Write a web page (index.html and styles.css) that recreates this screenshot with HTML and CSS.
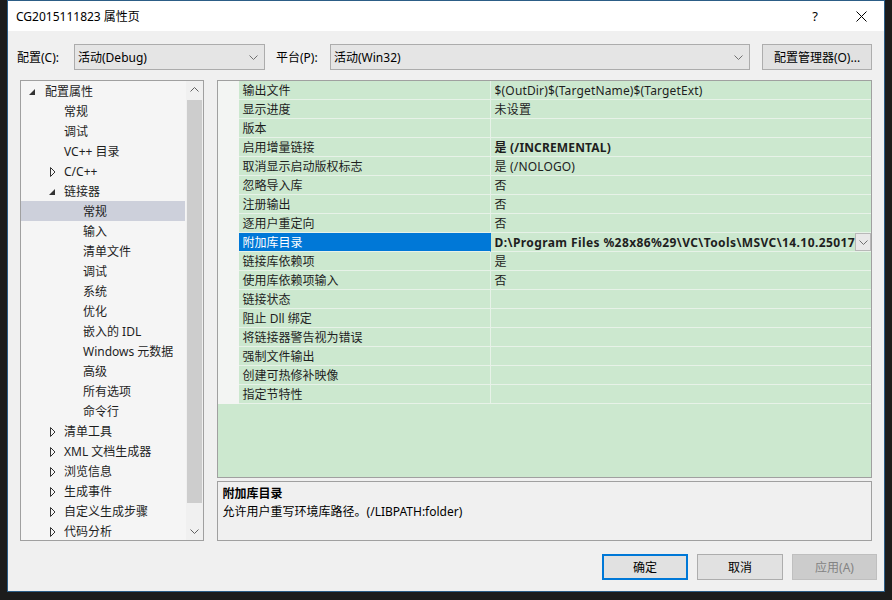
FILE: index.html
```html
<!DOCTYPE html>
<html lang="zh-CN">
<head>
<meta charset="utf-8">
<title>CG2015111823 属性页</title>
<link rel="stylesheet" href="styles.css">
</head>
<body>
<div class="desk">
  <div class="dialog">
    <div class="titlebar">
      <span class="title">CG2015111823 属性页</span>
      <span class="tb-btn help">?</span>
      <span class="tb-btn close"><svg width="11" height="11" viewBox="0 0 11 11"><path d="M0.5 0.5 L10.5 10.5 M10.5 0.5 L0.5 10.5" stroke="#000" stroke-width="1" fill="none"/></svg></span>
    </div>
    <div class="content">
      <div class="toprow">
        <span class="lbl lbl1">配置(C):</span>
        <div class="combo c1"><span>活动(Debug)</span><svg class="chev" width="9" height="5" viewBox="0 0 9 5"><path d="M0.5 0.5 L4.5 4.5 L8.5 0.5" stroke="#707070" fill="none"/></svg></div>
        <span class="lbl lbl2">平台(P):</span>
        <div class="combo c2"><span>活动(Win32)</span><svg class="chev" width="9" height="5" viewBox="0 0 9 5"><path d="M0.5 0.5 L4.5 4.5 L8.5 0.5" stroke="#707070" fill="none"/></svg></div>
        <div class="btn cfgmgr">配置管理器(O)...</div>
      </div>
      <div class="main">
        <div class="tree">
          <div class="tlist">
            <div class="ti l1"><span class="tw"><svg class="exp" width="7" height="7" viewBox="0 0 7 7"><path d="M6 0 L6 6 L0 6 Z" fill="#333"/></svg></span><span>配置属性</span></div>
            <div class="ti l2"><span class="tw"></span><span>常规</span></div>
            <div class="ti l2"><span class="tw"></span><span>调试</span></div>
            <div class="ti l2"><span class="tw"></span><span>VC++ 目录</span></div>
            <div class="ti l2"><span class="tw"><svg class="col" width="6" height="10" viewBox="0 0 6 10"><path d="M0.5 0.5 L5 5 L0.5 9.5 Z" stroke="#333" fill="none"/></svg></span><span>C/C++</span></div>
            <div class="ti l2"><span class="tw"><svg class="exp2" width="7" height="7" viewBox="0 0 7 7"><path d="M6 0 L6 6 L0 6 Z" fill="#333"/></svg></span><span>链接器</span></div>
            <div class="ti l3 sel"><span class="tw"></span><span>常规</span></div>
            <div class="ti l3"><span class="tw"></span><span>输入</span></div>
            <div class="ti l3"><span class="tw"></span><span>清单文件</span></div>
            <div class="ti l3"><span class="tw"></span><span>调试</span></div>
            <div class="ti l3"><span class="tw"></span><span>系统</span></div>
            <div class="ti l3"><span class="tw"></span><span>优化</span></div>
            <div class="ti l3"><span class="tw"></span><span>嵌入的 IDL</span></div>
            <div class="ti l3"><span class="tw"></span><span>Windows 元数据</span></div>
            <div class="ti l3"><span class="tw"></span><span>高级</span></div>
            <div class="ti l3"><span class="tw"></span><span>所有选项</span></div>
            <div class="ti l3"><span class="tw"></span><span>命令行</span></div>
            <div class="ti l2"><span class="tw"><svg class="col" width="6" height="10" viewBox="0 0 6 10"><path d="M0.5 0.5 L5 5 L0.5 9.5 Z" stroke="#333" fill="none"/></svg></span><span>清单工具</span></div>
            <div class="ti l2"><span class="tw"><svg class="col" width="6" height="10" viewBox="0 0 6 10"><path d="M0.5 0.5 L5 5 L0.5 9.5 Z" stroke="#333" fill="none"/></svg></span><span>XML 文档生成器</span></div>
            <div class="ti l2"><span class="tw"><svg class="col" width="6" height="10" viewBox="0 0 6 10"><path d="M0.5 0.5 L5 5 L0.5 9.5 Z" stroke="#333" fill="none"/></svg></span><span>浏览信息</span></div>
            <div class="ti l2"><span class="tw"><svg class="col" width="6" height="10" viewBox="0 0 6 10"><path d="M0.5 0.5 L5 5 L0.5 9.5 Z" stroke="#333" fill="none"/></svg></span><span>生成事件</span></div>
            <div class="ti l2"><span class="tw"><svg class="col" width="6" height="10" viewBox="0 0 6 10"><path d="M0.5 0.5 L5 5 L0.5 9.5 Z" stroke="#333" fill="none"/></svg></span><span>自定义生成步骤</span></div>
            <div class="ti l2"><span class="tw"><svg class="col" width="6" height="10" viewBox="0 0 6 10"><path d="M0.5 0.5 L5 5 L0.5 9.5 Z" stroke="#333" fill="none"/></svg></span><span>代码分析</span></div>
          </div>
          <div class="vscroll">
            <div class="sbtn"><svg width="9" height="5" viewBox="0 0 9 5"><path d="M0.5 4.5 L4.5 0.5 L8.5 4.5" stroke="#606060" fill="none"/></svg></div>
            <div class="strack"><div class="sthumb"></div></div>
            <div class="sbtn"><svg width="9" height="5" viewBox="0 0 9 5"><path d="M0.5 0.5 L4.5 4.5 L8.5 0.5" stroke="#606060" fill="none"/></svg></div>
          </div>
        </div>
        <div class="right">
          <div class="grid">
            <div class="row"><span class="gut"></span><span class="nm">输出文件</span><span class="vl">$(OutDir)$(TargetName)$(TargetExt)</span></div>
            <div class="row"><span class="gut"></span><span class="nm">显示进度</span><span class="vl">未设置</span></div>
            <div class="row"><span class="gut"></span><span class="nm">版本</span><span class="vl"></span></div>
            <div class="row"><span class="gut"></span><span class="nm">启用增量链接</span><span class="vl b">是 (/INCREMENTAL)</span></div>
            <div class="row"><span class="gut"></span><span class="nm">取消显示启动版权标志</span><span class="vl">是 (/NOLOGO)</span></div>
            <div class="row"><span class="gut"></span><span class="nm">忽略导入库</span><span class="vl">否</span></div>
            <div class="row"><span class="gut"></span><span class="nm">注册输出</span><span class="vl">否</span></div>
            <div class="row"><span class="gut"></span><span class="nm">逐用户重定向</span><span class="vl">否</span></div>
            <div class="row selrow"><span class="gut"></span><span class="nm">附加库目录</span><span class="vl b sv"><span class="vtxt">D:\Program Files %28x86%29\VC\Tools\MSVC\14.10.25017</span><span class="dd"><svg width="9" height="5" viewBox="0 0 9 5"><path d="M0.5 0.5 L4.5 4.5 L8.5 0.5" stroke="#707070" fill="none"/></svg></span></span></div>
            <div class="row"><span class="gut"></span><span class="nm">链接库依赖项</span><span class="vl">是</span></div>
            <div class="row"><span class="gut"></span><span class="nm">使用库依赖项输入</span><span class="vl">否</span></div>
            <div class="row"><span class="gut"></span><span class="nm">链接状态</span><span class="vl"></span></div>
            <div class="row"><span class="gut"></span><span class="nm">阻止 Dll 绑定</span><span class="vl"></span></div>
            <div class="row"><span class="gut"></span><span class="nm">将链接器警告视为错误</span><span class="vl"></span></div>
            <div class="row"><span class="gut"></span><span class="nm">强制文件输出</span><span class="vl"></span></div>
            <div class="row"><span class="gut"></span><span class="nm">创建可热修补映像</span><span class="vl"></span></div>
            <div class="row"><span class="gut"></span><span class="nm">指定节特性</span><span class="vl"></span></div>
          </div>
          <div class="desc">
            <div class="dtitle">附加库目录</div>
            <div class="dtext">允许用户重写环境库路径。(/LIBPATH:folder)</div>
          </div>
        </div>
      </div>
      <div class="bottom">
        <div class="btn ok">确定</div>
        <div class="btn">取消</div>
        <div class="btn disabled">应用(A)</div>
      </div>
    </div>
  </div>
</div>
</body>
</html>
```
FILE: styles.css
```css
* { box-sizing: border-box; }
html, body { margin: 0; padding: 0; }
body {
  width: 892px;
  height: 600px;
  overflow: hidden;
  background: #1c1c1c;
  font-family: "Segoe UI", "Noto Sans", "Noto Sans CJK SC", sans-serif;
  font-size: 12px;
  color: #000;
}
.desk {
  display: flex;
  padding-left: 7px;
}
.dialog {
  width: 878px;
  height: 592px;
  border: 1px solid #2c5d86;
  background: #f0f0f0;
  display: flex;
  flex-direction: column;
}
.titlebar {
  height: 30px;
  background: #fff;
  display: flex;
  align-items: center;
  padding-left: 8px;
}
.title { flex: 1; font-size: 12px; }
.tb-btn {
  width: 46px;
  height: 30px;
  display: flex;
  align-items: center;
  justify-content: center;
}
.help { font-size: 13px; }
.content {
  flex: 1;
  padding: 13px 12px 0 12px;
  display: flex;
  flex-direction: column;
}
.toprow {
  height: 26px;
  display: flex;
  align-items: center;
}
.lbl { white-space: nowrap; }
.lbl1 { width: 54px; margin-left: -3px; margin-right: 3px; }
.lbl2 { width: 54px; margin-left: 11px; }
.combo {
  height: 26px;
  border: 1px solid #acacac;
  background: #e5e5e5;
  display: flex;
  align-items: center;
  padding: 0 6px 0 3px;
}
.combo span { flex: 1; }
.c1 { width: 191px; }
.c2 { width: 420px; }
.btn {
  height: 26px;
  border: 1px solid #adadad;
  background: #e1e1e1;
  display: flex;
  align-items: center;
  justify-content: center;
}
.cfgmgr { width: 110px; margin-left: 12px; }
.main {
  margin-top: 10px;
  height: 461px;
  display: flex;
  gap: 13px;
}
.tree {
  width: 184px;
  height: 461px;
  border: 1px solid #a0a0a0;
  background: #f5f5f5;
  display: flex;
  overflow: hidden;
}
.tlist { flex: 1; overflow: hidden; }
.ti {
  height: 20px;
  line-height: 18px;
  padding-top: 2px;
  display: flex;
  align-items: center;
  white-space: nowrap;
  color: #1e1e1e;
}
.ti.l1 { padding-left: 5px; }
.ti.l2 { padding-left: 24px; }
.ti.l3 { padding-left: 43px; }
.ti.sel { background: #cdd0db; margin-right: 1px; }
.tw {
  width: 19px;
  height: 18px;
  display: flex;
  align-items: center;
}
.tw .exp { margin-left: 3px; }
.tw .exp2 { margin-left: 4px; }
.tw .col { margin-left: 5px; }
.vscroll {
  width: 17px;
  background: #f0f0f0;
  display: flex;
  flex-direction: column;
}
.sbtn {
  height: 17px;
  display: flex;
  align-items: center;
  justify-content: center;
}
.strack { flex: 1; padding: 2px 1px 20px 1px; }
.sthumb { height: 403px; background: #cdcdcd; }
.right {
  flex: 1;
  display: flex;
  flex-direction: column;
  gap: 3px;
}
.grid {
  height: 398px;
  border: 1px solid #a0a0a0;
  background: #cce8cf;
}
.row {
  height: 19px;
  display: flex;
  line-height: 16px;
  white-space: nowrap;
  color: #1e1e1e;
}
.gut { width: 21px; background: #f3f5f3; }
.nm {
  width: 252px;
  padding: 2px 0 0 4px;
  border-bottom: 1px solid #e7f2e8;
  border-right: 1px solid #e7f2e8;
  overflow: hidden;
}
.vl {
  flex: 1;
  padding: 2px 0 0 4px;
  border-bottom: 1px solid #e7f2e8;
  display: flex;
  overflow: hidden;
  letter-spacing: 0.15px;
}
.vl.b { font-weight: bold; }
.vl.sv { padding-top: 0; align-items: stretch; }
.vl.sv .vtxt { padding-top: 2px; letter-spacing: 0.4px; }
.selrow .nm { background: #0078d7; color: #fff; border-right-color: #0078d7; }
.vtxt { flex: 1; overflow: hidden; }
.dd {
  width: 16px;
  height: 18px;
  border: 1px solid #b8b8b8;
  background: #e8e8e8;
  display: flex;
  align-items: center;
  justify-content: center;
}
.desc {
  height: 60px;
  border: 1px solid #a0a0a0;
  background: #f0f0f0;
  padding: 3px 5px;
  line-height: 18px;
}
.dtitle { font-weight: bold; }
.bottom {
  margin-top: 13px;
  margin-right: -5px;
  display: flex;
  justify-content: flex-end;
  gap: 9px;
}
.bottom .btn { width: 86px; }
.bottom .btn.ok { border: 2px solid #0078d7; }
.bottom .btn.disabled {
  width: 85px;
  background: #cccccc;
  border-color: #bfbfbf;
  color: #838383;
}
```
